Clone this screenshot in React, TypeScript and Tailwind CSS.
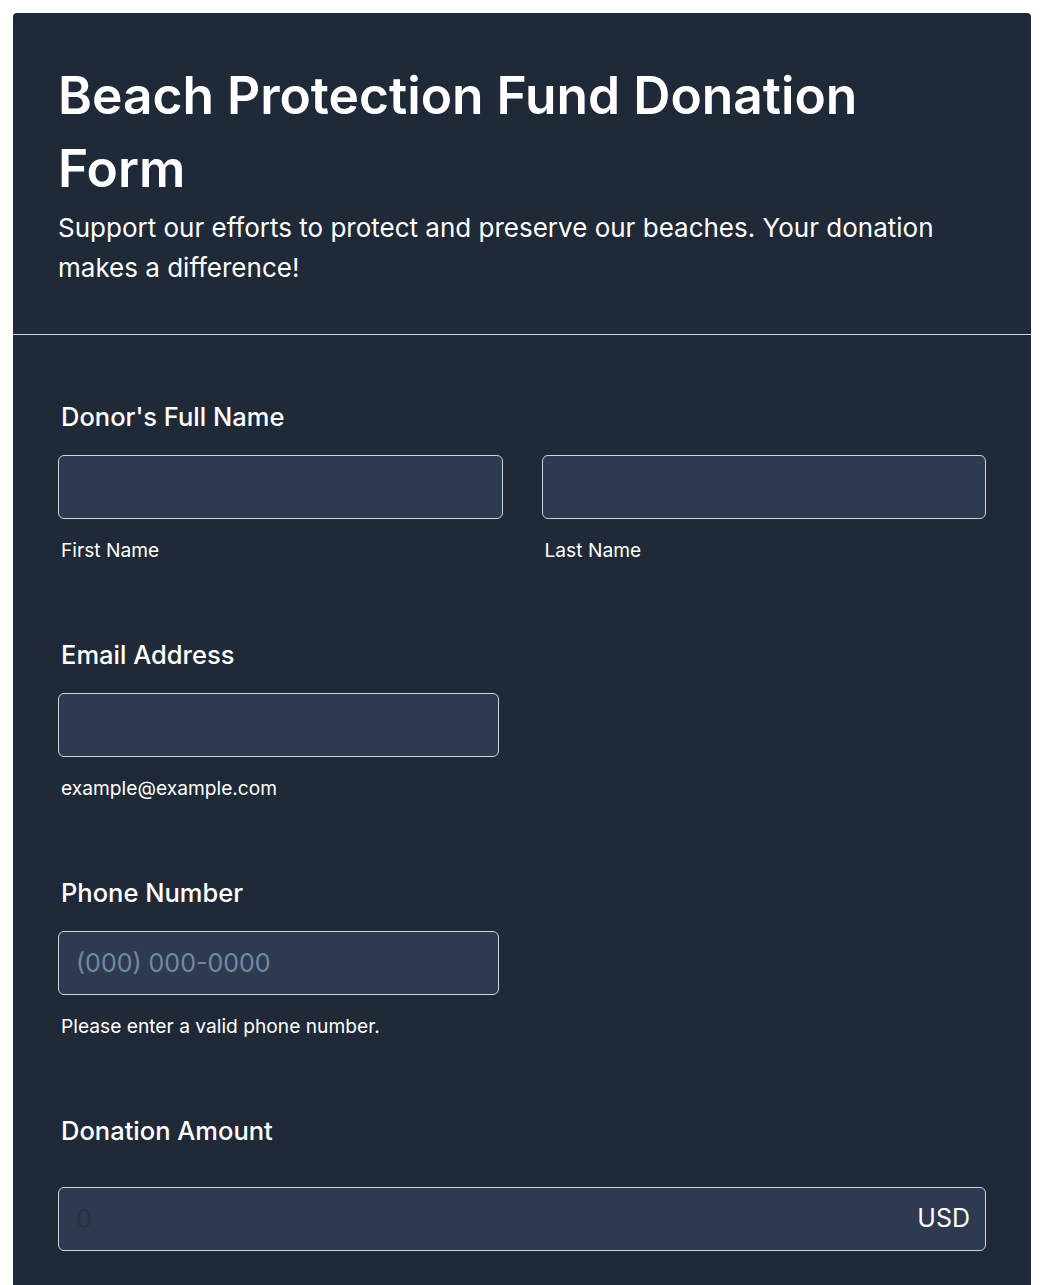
import React from "react";

type FieldProps = {
  label: string;
  children: React.ReactNode;
  hint?: string;
  gap?: "sm" | "lg";
};

function Field({ label, children, hint, gap = "sm" }: FieldProps) {
  return (
    <div className="flex flex-col">
      <label className="ml-[3px] text-[25.5px] leading-9 font-medium text-white">{label}</label>
      <div className={gap === "sm" ? "mt-5" : "mt-[38px]"}>{children}</div>
      {hint && <p className="mt-[17px] ml-[3px] text-[19.2px] leading-7 text-white">{hint}</p>}
    </div>
  );
}

const inputCls =
  "h-[64px] w-full rounded-md border border-[#cbd5e1] bg-[#2e3a4f] px-[17px] text-[25px] text-white outline-none placeholder:text-[#7189a8]";

export default function App() {
  return (
    <div className="min-h-screen bg-white p-[13px]" style={{ fontFamily: "Inter, 'Noto Sans', sans-serif" }}>
      <div className="overflow-hidden rounded-[4px] bg-[#1f2937]">
        {/* Header */}
        <div className="border-b border-[#d1d5db] px-[45px] pt-[46px] pb-[46px]">
          <h1 className="text-[51.5px] leading-[73px] font-semibold text-white">
            Beach Protection Fund Donation Form
          </h1>
          <p className="mt-[3px] text-[26px] leading-10 text-white">
            Support our efforts to protect and preserve our beaches. Your donation makes a difference!
          </p>
        </div>

        {/* Form body */}
        <div className="flex flex-col gap-[73px] px-[45px] pt-[64px] pb-16">
          <Field label="Donor's Full Name">
            <div className="grid grid-cols-2 gap-[39px]">
              <div className="flex flex-col">
                <input className={inputCls} />
                <p className="mt-[17px] ml-[3px] text-[19.2px] leading-7 text-white">First Name</p>
              </div>
              <div className="flex flex-col">
                <input className={inputCls} />
                <p className="mt-[17px] ml-[3px] text-[19.2px] leading-7 text-white">Last Name</p>
              </div>
            </div>
          </Field>

          <Field label="Email Address" hint="example@example.com">
            <input type="email" className={`${inputCls} !w-[441px]`} />
          </Field>

          <Field label="Phone Number" hint="Please enter a valid phone number.">
            <input type="tel" placeholder="(000) 000-0000" className={`${inputCls} !w-[441px]`} />
          </Field>

          <Field label="Donation Amount" gap="lg">
            <div className="relative">
              <input
                placeholder="0"
                className="h-[64px] w-full rounded-md border border-[#cbd5e1] bg-[#2e3a4f] px-[17px] pr-20 text-[25px] text-white outline-none placeholder:text-[#263243]"
              />
              <span className="pointer-events-none absolute top-1/2 right-[16px] -translate-y-1/2 text-[25px] text-white">
                USD
              </span>
            </div>
          </Field>
        </div>
      </div>
    </div>
  );
}
